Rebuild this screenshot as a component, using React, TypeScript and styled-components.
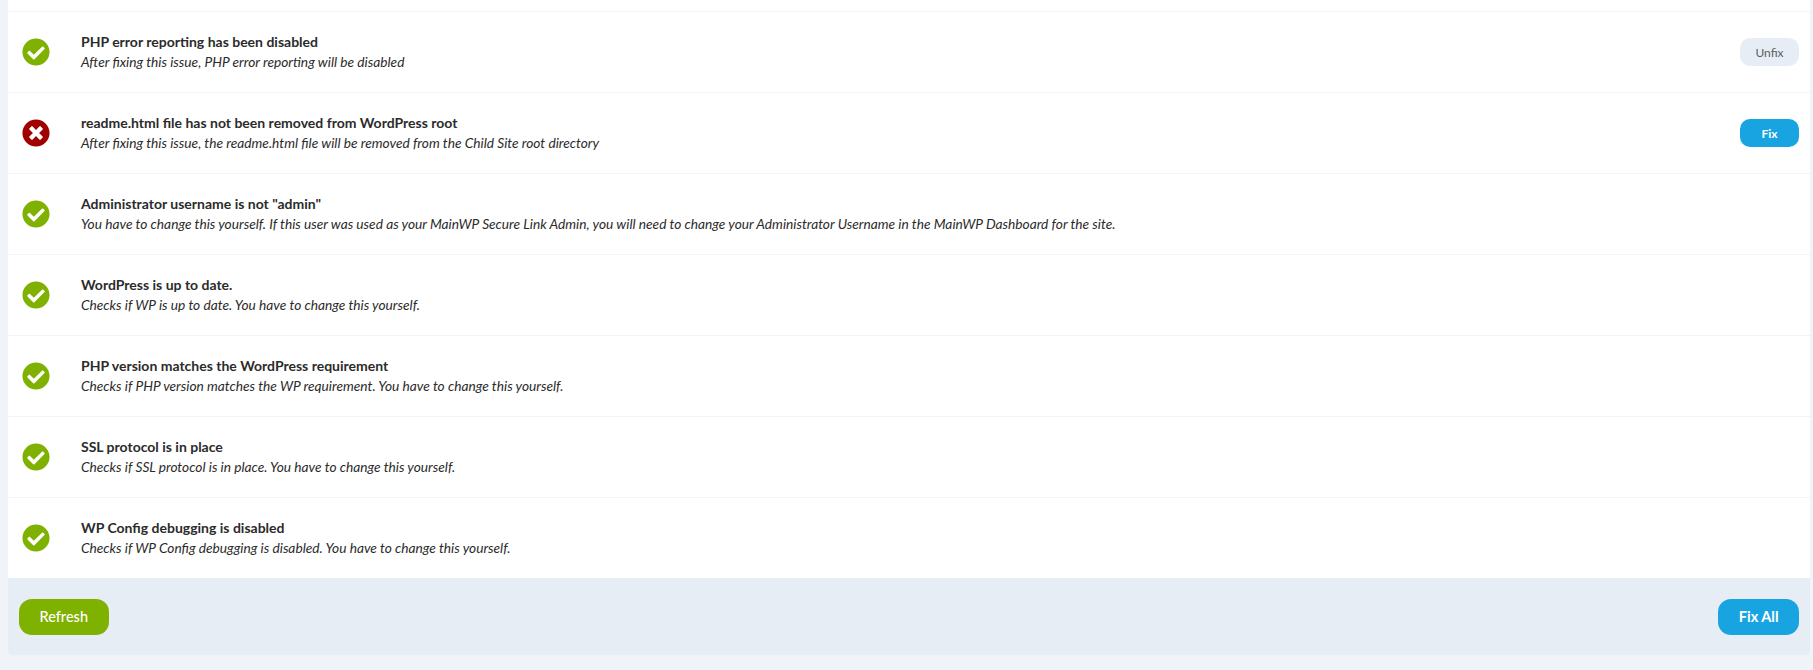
import React from "react";
import styled, { createGlobalStyle } from "styled-components";
import { FaCheckCircle, FaTimesCircle } from "react-icons/fa";

interface Issue {
  title: string;
  note: string;
  ok: boolean;
  action?: "Fix" | "Unfix";
}

const issues: Issue[] = [
  {
    title: "PHP error reporting has been disabled",
    note: "After fixing this issue, PHP error reporting will be disabled",
    ok: true,
    action: "Unfix",
  },
  {
    title: "readme.html file has not been removed from WordPress root",
    note: "After fixing this issue, the readme.html file will be removed from the Child Site root directory",
    ok: false,
    action: "Fix",
  },
  {
    title: 'Administrator username is not "admin"',
    note: "You have to change this yourself. If this user was used as your MainWP Secure Link Admin, you will need to change your Administrator Username in the MainWP Dashboard for the site.",
    ok: true,
  },
  {
    title: "WordPress is up to date.",
    note: "Checks if WP is up to date. You have to change this yourself.",
    ok: true,
  },
  {
    title: "PHP version matches the WordPress requirement",
    note: "Checks if PHP version matches the WP requirement. You have to change this yourself.",
    ok: true,
  },
  {
    title: "SSL protocol is in place",
    note: "Checks if SSL protocol is in place. You have to change this yourself.",
    ok: true,
  },
  {
    title: "WP Config debugging is disabled",
    note: "Checks if WP Config debugging is disabled. You have to change this yourself.",
    ok: true,
  },
];

export default function App() {
  return (
    <>
      <GlobalStyle />
      <Page>
        <Card>
          <TopStrip />
          {issues.map((issue) => (
            <Row key={issue.title}>
              <IconCell $ok={issue.ok}>
                {issue.ok ? <FaCheckCircle size={28} /> : <FaTimesCircle size={28} />}
              </IconCell>
              <RowText>
                <Title>{issue.title}</Title>
                <Note>{issue.note}</Note>
              </RowText>
              {issue.action && (
                <SmallButton $fix={issue.action === "Fix"}>{issue.action}</SmallButton>
              )}
            </Row>
          ))}
          <Footer>
            <BigButton $color="#7fb100">Refresh</BigButton>
            <BigButton $color="#18a4e0" $bold>
              Fix All
            </BigButton>
          </Footer>
        </Card>
      </Page>
    </>
  );
}

const GlobalStyle = createGlobalStyle`
  html, body {
    margin: 0;
    padding: 0;
    height: 100%;
    overflow: hidden;
    background: #f0f4f9;
  }
  body {
    font-family: "Lato", "Liberation Sans", sans-serif;
  }
`;

const Page = styled.div`
  height: 670px;
  padding: 0 3px 15px 8px;
  box-sizing: border-box;
`;

const Card = styled.div`
  background: #fff;
  border-radius: 0 0 4px 4px;
  overflow: hidden;
`;

const TopStrip = styled.div`
  height: 11px;
`;

const Row = styled.div`
  display: flex;
  align-items: center;
  height: 81px;
  box-sizing: border-box;
  border-top: 1px solid #f0f4f9;
  padding-right: 11px;
`;

const IconCell = styled.div<{ $ok: boolean }>`
  width: 73px;
  display: flex;
  justify-content: flex-start;
  padding-left: 14px;
  padding-bottom: 1px;
  box-sizing: border-box;
  flex-shrink: 0;
  color: ${(p) => (p.$ok ? "#7fb100" : "#a00000")};
`;

const RowText = styled.div`
  flex: 1;
  min-width: 0;
`;

const Title = styled.div`
  font-size: 14px;
  font-weight: 700;
  line-height: 20px;
  color: #2b2b2b;
`;

const Note = styled.div`
  font-size: 13.73px;
  font-style: italic;
  line-height: 20px;
  color: #2b2b2b;
`;

const SmallButton = styled.button<{ $fix?: boolean }>`
  width: 59px;
  height: 28px;
  border: 0;
  padding: 0;
  border-radius: 10px;
  font-family: inherit;
  font-size: 12px;
  font-weight: ${(p) => (p.$fix ? 700 : 400)};
  color: ${(p) => (p.$fix ? "#fff" : "#5a5f66")};
  background: ${(p) => (p.$fix ? "#18a4e0" : "#e7edf5")};
`;

const Footer = styled.div`
  display: flex;
  align-items: center;
  justify-content: space-between;
  height: 77px;
  padding: 0 11px;
  box-sizing: border-box;
  background: #e7edf5;
`;

const BigButton = styled.button<{ $color: string; $bold?: boolean }>`
  height: 36px;
  padding: 0 20.5px;
  border: 0;
  border-radius: 13px;
  font-family: inherit;
  font-size: 14.5px;
  font-weight: ${(p) => (p.$bold ? 700 : 500)};
  color: #fff;
  background: ${(p) => p.$color};
`;
